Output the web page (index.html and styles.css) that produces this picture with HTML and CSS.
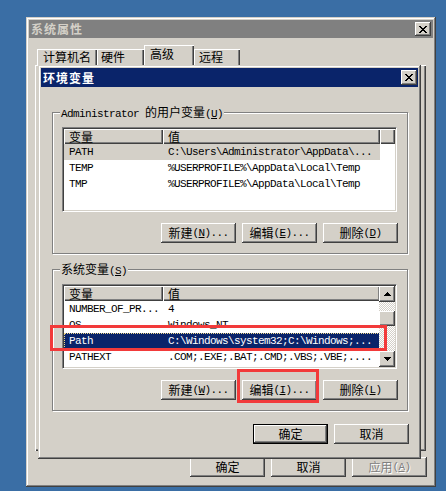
FILE: index.html
```html
<!DOCTYPE html>
<html>
<head>
<meta charset="utf-8">
<title>系统属性</title>
<link rel="stylesheet" href="styles.css">
</head>
<body>
<div class="win outer">
  <div class="titlebar inactive">
    <span class="ttext">系统属性</span>
    <span class="xbtn"><svg width="8" height="7" viewBox="0 0 8 7" shape-rendering="crispEdges"><path d="M0 0h2v1H0zM6 0h2v1H6zM1 1h2v1H1zM5 1h2v1H5zM2 2h4v1H2zM3 3h2v1H3zM2 4h4v1H2zM1 5h2v1H1zM5 5h2v1H5zM0 6h2v1H0zM6 6h2v1H6z" fill="#000"/></svg></span>
  </div>
  <div class="tabs">
    <div class="tab t1">计算机名</div>
    <div class="tab t2">硬件</div>
    <div class="tab t3 sel">高级</div>
    <div class="tab t4">远程</div>
  </div>
  <div class="panel"></div>
  <div class="btnrow outer-btns">
    <div class="btn">确定</div>
    <div class="btn">取消</div>
    <div class="btn dis">应用<span class="m">(<u>A</u>)</span></div>
  </div>
</div>

<div class="win inner">
  <div class="titlebar active">
    <span class="ttext">环境变量</span>
    <span class="xbtn"><svg width="8" height="7" viewBox="0 0 8 7" shape-rendering="crispEdges"><path d="M0 0h2v1H0zM6 0h2v1H6zM1 1h2v1H1zM5 1h2v1H5zM2 2h4v1H2zM3 3h2v1H3zM2 4h4v1H2zM1 5h2v1H1zM5 5h2v1H5zM0 6h2v1H0zM6 6h2v1H6z" fill="#000"/></svg></span>
  </div>
  <div class="dlg-body">
    <div class="group g1">
      <div class="legend"><span class="m">Administrator </span>的用户变量<span class="m">(<u>U</u>)</span></div>
      <div class="lv">
        <div class="lv-main">
          <div class="lv-head">
            <div class="hc c1">变量</div>
            <div class="hc c2">值</div>
            <div class="hc c3"></div>
          </div>
          <div class="lv-row inactive-sel"><div class="cell c1 m">PATH</div><div class="cell c2 m">C:\Users\Administrator\AppData\...</div></div>
          <div class="lv-row"><div class="cell c1 m">TEMP</div><div class="cell c2 m">%USERPROFILE%\AppData\Local\Temp</div></div>
          <div class="lv-row"><div class="cell c1 m">TMP</div><div class="cell c2 m">%USERPROFILE%\AppData\Local\Temp</div></div>
        </div>
      </div>
      <div class="btnrow grp-btns">
        <div class="btn">新建<span class="m">(<u>N</u>)...</span></div>
        <div class="btn">编辑<span class="m">(<u>E</u>)...</span></div>
        <div class="btn">删除<span class="m">(<u>D</u>)</span></div>
      </div>
    </div>

    <div class="group g2">
      <div class="legend">系统变量<span class="m">(<u>S</u>)</span></div>
      <div class="lv">
        <div class="lv-main">
          <div class="lv-head">
            <div class="hc c1">变量</div>
            <div class="hc c2">值</div>
          </div>
          <div class="lv-row"><div class="cell c1 m">NUMBER_OF_PR...</div><div class="cell c2 m">4</div></div>
          <div class="lv-row"><div class="cell c1 m">OS</div><div class="cell c2 m">Windows_NT</div></div>
          <div class="lv-row active-sel"><div class="cell c1 m">Path</div><div class="cell c2 m">C:\Windows\system32;C:\Windows;...</div></div>
          <div class="lv-row"><div class="cell c1 m">PATHEXT</div><div class="cell c2 m">.COM;.EXE;.BAT;.CMD;.VBS;.VBE;....</div></div>
        </div>
        <div class="sbar">
          <div class="sb-btn"><svg width="7" height="4" viewBox="0 0 7 4" shape-rendering="crispEdges"><path d="M3 0h1v1H3zM2 1h3v1H2zM1 2h5v1H1zM0 3h7v1H0z" fill="#000"/></svg></div>
          <div class="sb-track">
            <div class="sb-thumb"></div>
          </div>
          <div class="sb-btn"><svg width="7" height="4" viewBox="0 0 7 4" shape-rendering="crispEdges"><path d="M0 0h7v1H0zM1 1h5v1H1zM2 2h3v1H2zM3 3h1v1H3z" fill="#000"/></svg></div>
        </div>
      </div>
      <div class="btnrow grp-btns">
        <div class="btn">新建<span class="m">(<u>W</u>)...</span></div>
        <div class="btn">编辑<span class="m">(<u>I</u>)...</span></div>
        <div class="btn">删除<span class="m">(<u>L</u>)</span></div>
      </div>
    </div>

    <div class="btnrow dlg-btns">
      <div class="btn default">确定</div>
      <div class="btn">取消</div>
    </div>
  </div>
</div>

<div class="mark mark-row"></div>
<div class="mark mark-btn"></div>
</body>
</html>
```

FILE: styles.css
```css
html, body {
  margin: 0;
  padding: 0;
}
body {
  width: 446px;
  height: 491px;
  overflow: hidden;
  position: relative;
  background: #3a6ea5;
  font-family: "Noto Sans CJK SC", "Noto Sans", sans-serif;
  font-size: 12px;
  line-height: 12px;
  color: #000;
}
.m {
  font-family: "Liberation Mono", "DejaVu Sans Mono", monospace;
  font-size: 11px;
  letter-spacing: -0.6px;
}
u {
  text-decoration: underline;
  text-underline-offset: 1px;
}

/* windows */
.win {
  position: absolute;
  box-sizing: border-box;
  padding: 3px;
  background: #d4d0c8;
  box-shadow: inset -1px -1px #404040, inset 1px 1px #d4d0c8,
              inset -2px -2px #808080, inset 2px 2px #fff;
  display: flex;
  flex-direction: column;
}
.outer {
  left: 26px;
  top: 17px;
  width: 410px;
  height: 470px;
}
.inner {
  left: 38px;
  top: 65px;
  width: 383px;
  height: 394px;
}

.titlebar {
  height: 18px;
  flex: none;
  display: flex;
  align-items: center;
  justify-content: space-between;
  padding-left: 2px;
}
.inner .titlebar {
  height: 19px;
}
.inactive {
  background: #808080;
  color: #d4d0c8;
}
.active {
  background: #0a246a;
  color: #fff;
}
.ttext {
  font-weight: bold;
  letter-spacing: 1px;
}
.xbtn {
  width: 16px;
  height: 14px;
  margin-right: 2px;
  background: #d4d0c8;
  box-shadow: inset -1px -1px #404040, inset 1px 1px #fff,
              inset -2px -2px #808080;
  display: flex;
  align-items: center;
  justify-content: center;
}
.xbtn svg {
  display: block;
  margin-left: -1px;
}
.inner .xbtn {
  margin-right: 1px;
  height: 15px;
}

/* tabs */
.tabs {
  display: flex;
  align-items: flex-end;
  height: 20px;
  margin: 7px 0 0 8px;
  flex: none;
}
.tab {
  box-sizing: border-box;
  height: 16px;
  padding-left: 6px;
  display: flex;
  align-items: center;
  box-shadow: inset 1px 1px #fff, inset -1px 0 #404040, inset -2px 0 #808080;
}
.t1 { width: 60px; }
.t2 { width: 47px; padding-left: 4px; }
.t3 { width: 50px; }
.t4 { width: 46px; padding-left: 5px; }
.tab.sel {
  height: 20px;
  align-items: flex-start;
  padding-top: 3px;
}
.panel {
  flex: 1;
  margin: 0 7px 0 6px;
  box-shadow: inset 1px 1px #fff, inset -1px -1px #404040, inset -2px -2px #808080;
}

/* buttons */
.btnrow {
  display: flex;
  justify-content: flex-end;
  gap: 6px;
  flex: none;
}
.outer-btns {
  margin: 6px 6px 7px 0;
}
.btn {
  box-sizing: border-box;
  width: 75px;
  height: 20px;
  display: flex;
  align-items: center;
  justify-content: center;
  background: #d4d0c8;
  box-shadow: inset -1px -1px #404040, inset 1px 1px #fff,
              inset -2px -2px #808080;
}
.btn.default {
  border: 1px solid #000;
}
.btn.dis {
  color: #808080;
  text-shadow: 1px 1px #fff;
}

/* dialog body */
.dlg-body {
  flex: 1;
  display: flex;
  flex-direction: column;
  padding-left: 11px;
}
.group {
  position: relative;
  box-sizing: border-box;
  width: 356px;
  height: 142px;
  border: 1px solid #808080;
  box-shadow: inset 1px 1px #fff, 1px 1px #fff;
  padding: 14px 10px 0 9px;
}
.g1 { margin-top: 25px; }
.g2 { margin-top: 15px; }
.legend {
  position: absolute;
  left: 7px;
  top: -7px;
  padding: 0 1px;
  background: #d4d0c8;
  line-height: 12px;
}
.grp-btns {
  margin-top: 11px;
  margin-right: -1px;
}
.dlg-btns {
  margin-top: 13px;
  padding-right: 9px;
}

/* list view */
.lv {
  box-sizing: border-box;
  width: 335px;
  height: 85px;
  background: #fff;
  border: 1px solid;
  border-color: #808080 #fff #fff #808080;
  padding: 1px;
  box-shadow: inset 1px 1px #404040, inset -1px -1px #d4d0c8;
  display: flex;
  overflow: hidden;
}
.lv-main {
  flex: 1;
  min-width: 0;
  overflow: hidden;
}
.lv-head {
  display: flex;
  height: 15px;
  background: #d4d0c8;
}
.hc {
  box-sizing: border-box;
  height: 15px;
  padding-left: 5px;
  display: flex;
  align-items: center;
  flex: none;
  box-shadow: inset 1px 1px #fff, inset -1px -1px #404040, inset -2px -2px #808080;
}
.hc.c3 {
  flex: 1;
}
.c1 { width: 99px; flex: none; }
.c2 { width: 217px; flex: none; }
.lv-row {
  display: flex;
  height: 16px;
  width: 316px;
}
.cell {
  box-sizing: border-box;
  padding-left: 5px;
  display: flex;
  align-items: center;
  white-space: nowrap;
  overflow: hidden;
}
.inactive-sel {
  background: #d4d0c8;
}
.active-sel {
  background: #0a246a;
  color: #fff;
  outline: 1px dotted #f0d88a;
  outline-offset: -1px;
}

/* scrollbar */
.sbar {
  width: 16px;
  flex: none;
  display: flex;
  flex-direction: column;
}
.sb-btn {
  height: 16px;
  flex: none;
  background: #d4d0c8;
  box-shadow: inset -1px -1px #404040, inset 1px 1px #fff,
              inset -2px -2px #808080;
  display: flex;
  align-items: center;
  justify-content: center;
}
.sb-track {
  flex: 1;
  background: repeating-conic-gradient(#fff 0 25%, #d4d0c8 0 50%) 0 0 / 2px 2px;
  padding-top: 9px;
}
.sb-thumb {
  height: 15px;
  background: #d4d0c8;
  box-shadow: inset -1px -1px #404040, inset 1px 1px #fff,
              inset -2px -2px #808080;
}

/* red annotation boxes */
.mark {
  position: absolute;
  border: 3px solid #f23a3a;
  box-sizing: border-box;
}
.mark-row {
  left: 50px;
  top: 325px;
  width: 337px;
  height: 26px;
}
.mark-btn {
  left: 237px;
  top: 369px;
  width: 82px;
  height: 34px;
}
```
